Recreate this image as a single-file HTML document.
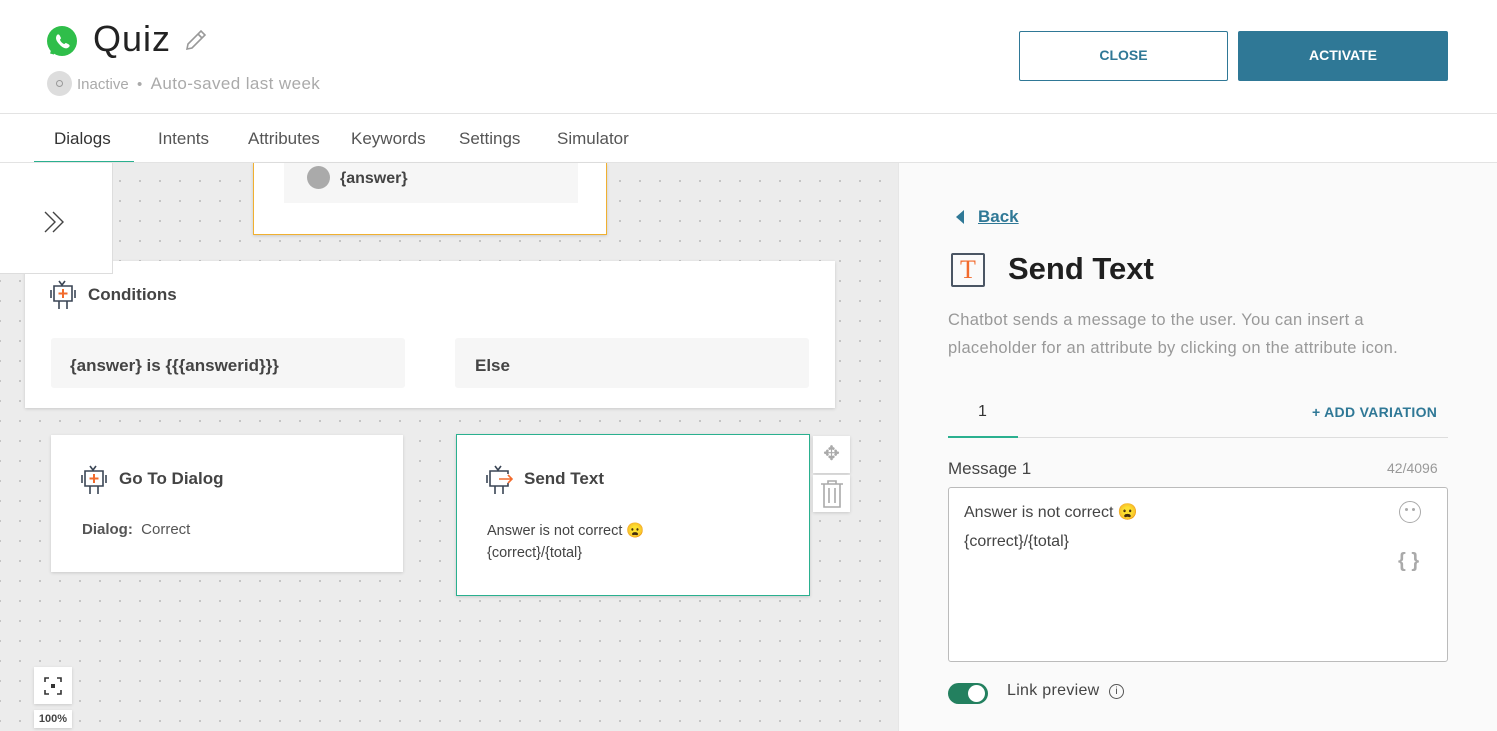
<!DOCTYPE html>
<html><head><style>
*{box-sizing:border-box;margin:0;padding:0}
body{width:1497px;height:731px;overflow:hidden;font-family:"Liberation Sans",sans-serif;background:#fff;position:relative;color:#333}
.a{position:absolute}
.canvas{left:0;top:163px;width:898px;height:568px;background-color:#ececec;background-image:radial-gradient(#b8b8b8 0.8px,transparent 1px);background-size:20px 20px;background-position:10px 8px}
.card{background:#fff;box-shadow:0 1px 3px rgba(0,0,0,.15)}
.bot{width:28px;height:34px}
</style></head><body>
<div class="a" style="left:47px;top:26px;width:30px;height:30px;border-radius:50%;background:#2fbe4a"></div>
<svg class="a" style="left:47px;top:26px" width="30" height="30" viewBox="0 0 30 30"><path d="M5 28 L7 21" stroke="#2fbe4a" stroke-width="4"/><path d="M10 9c1-1 2-1 3 1l1 2c0 1-1 1-1 2 1 2 2 3 4 4 1 0 1-1 2-1l2 1c2 1 2 2 1 3-2 2-5 2-9-2s-5-7-3-10z" fill="#fff"/></svg>
<div class="a" style="left:93px;top:18px;font-size:36px;color:#222;letter-spacing:1px">Quiz</div>
<svg class="a" style="left:183px;top:27px" width="26" height="26" viewBox="0 0 26 26"><path d="M4 22 L5 17 L18 4 L22 8 L9 21 Z M15 7 L19 11" fill="none" stroke="#999" stroke-width="1.6"/></svg>
<div class="a" style="left:47px;top:71px;width:25px;height:25px;border-radius:50%;background:#ddd"></div>
<div class="a" style="left:56px;top:80px;width:7px;height:7px;border-radius:50%;border:1.5px solid #999"></div>
<div class="a" style="left:77px;top:74px;font-size:15px;color:#aaa">Inactive &nbsp;•&nbsp; <span style="font-size:17px;letter-spacing:0.4px">Auto-saved last week</span></div>
<div class="a" style="left:1019px;top:31px;width:209px;height:50px;border:1px solid #2f7896;border-radius:2px;color:#2f7896;font-weight:bold;font-size:14px;text-align:center;line-height:46px">CLOSE</div>
<div class="a" style="left:1238px;top:31px;width:210px;height:50px;background:#2f7896;border-radius:2px;color:#fff;font-weight:bold;font-size:14px;text-align:center;line-height:48px">ACTIVATE</div>
<div class="a" style="left:0;top:113px;width:1497px;height:1px;background:#e3e3e3"></div>
<div class="a" style="top:129px;left:54px;font-size:17px;color:#333">Dialogs</div>
<div class="a" style="top:129px;left:158px;font-size:17px;color:#555">Intents</div>
<div class="a" style="top:129px;left:248px;font-size:17px;color:#555">Attributes</div>
<div class="a" style="top:129px;left:351px;font-size:17px;color:#555">Keywords</div>
<div class="a" style="top:129px;left:459px;font-size:17px;color:#555">Settings</div>
<div class="a" style="top:129px;left:557px;font-size:17px;color:#555">Simulator</div>
<div class="a canvas"></div>
<div class="a" style="left:34px;top:161px;width:100px;height:2px;background:#2ab08f"></div>
<div class="a" style="left:0;top:162px;width:1497px;height:1px;background:#e3e3e3"></div>
<div class="a card" style="left:253px;top:163px;width:354px;height:72px;border:1px solid #f0b030;border-top:none"></div>
<div class="a" style="left:284px;top:163px;width:294px;height:40px;background:#f6f6f6"></div>
<div class="a" style="left:307px;top:166px;width:23px;height:23px;border-radius:50%;background:#aaa"></div>
<div class="a" style="left:340px;top:170px;font-size:16px;font-weight:bold;color:#444">{answer}</div>
<div class="a card" style="left:25px;top:261px;width:810px;height:147px"></div>
<div class="a" style="left:0;top:163px;width:113px;height:111px;background:#fff;border:1px solid #ddd;border-top:none;border-left:none"></div>
<svg class="a" style="left:42px;top:210px" width="24" height="24" viewBox="0 0 24 24"><path d="M3 2l10 10-10 10M11 2l10 10-10 10" fill="none" stroke="#444" stroke-width="1.4"/></svg>
<svg class="a bot" style="left:49px;top:279px" viewBox="0 0 28 34"><path d="M10 2l3 4 3-4M5 7h18v15H5z M2 11v8 M26 11v8 M10 22v8 M18 22v8" fill="none" stroke="#3a4555" stroke-width="1.6"/><path d="M14 10v9M9.5 14.5h9" stroke="#f26b2d" stroke-width="2"/></svg>
<div class="a" style="left:88px;top:285px;font-size:17px;font-weight:bold;color:#444">Conditions</div>
<div class="a" style="left:51px;top:338px;width:354px;height:50px;background:#f6f6f6;border-radius:3px"></div>
<div class="a" style="left:70px;top:356px;font-size:17px;font-weight:bold;color:#444">{answer} is {{{answerid}}}</div>
<div class="a" style="left:455px;top:338px;width:354px;height:50px;background:#f6f6f6;border-radius:3px"></div>
<div class="a" style="left:475px;top:356px;font-size:17px;font-weight:bold;color:#444">Else</div>
<div class="a card" style="left:51px;top:435px;width:352px;height:137px"></div>
<svg class="a bot" style="left:80px;top:464px" viewBox="0 0 28 34"><path d="M10 2l3 4 3-4M5 7h18v15H5z M2 11v8 M26 11v8 M10 22v8 M18 22v8" fill="none" stroke="#3a4555" stroke-width="1.6"/><path d="M14 10v9M9.5 14.5h9" stroke="#f26b2d" stroke-width="2"/></svg>
<div class="a" style="left:119px;top:469px;font-size:17px;font-weight:bold;color:#444">Go To Dialog</div>
<div class="a" style="left:82px;top:521px;font-size:15px;color:#555"><b>Dialog:</b>&nbsp; Correct</div>
<div class="a card" style="left:456px;top:434px;width:354px;height:162px;border:1px solid #2ab08f"></div>
<svg class="a bot" style="left:485px;top:464px" viewBox="0 0 28 34"><path d="M10 2l3 4 3-4M23 10V7H5v15h18v-3 M2 11v8 M10 22v8 M18 22v8" fill="none" stroke="#3a4555" stroke-width="1.6"/><path d="M14 15h13M23 11l4 4-4 4" fill="none" stroke="#f26b2d" stroke-width="1.6"/></svg>
<div class="a" style="left:524px;top:469px;font-size:17px;font-weight:bold;color:#444">Send Text</div>
<div class="a" style="left:487px;top:520px;font-size:14.5px;color:#444;line-height:22px">Answer is not correct 😦<br>{correct}/{total}</div>
<div class="a card" style="left:813px;top:436px;width:37px;height:37px;color:#aaa;text-align:center;line-height:37px;font-size:20px">✥</div>
<div class="a card" style="left:813px;top:475px;width:37px;height:37px"></div>
<svg class="a" style="left:819px;top:479px" width="26" height="30" viewBox="0 0 26 30"><path d="M2 5h22M9 5V2h8v3M5 5v23h16V5M10 9v15M16 9v15" fill="none" stroke="#aaa" stroke-width="1.6"/></svg>
<div class="a card" style="left:34px;top:667px;width:38px;height:37px"></div>
<svg class="a" style="left:44px;top:677px" width="18" height="18" viewBox="0 0 18 18"><path d="M1 5V1h4M13 1h4v4M17 13v4h-4M5 17H1v-4" fill="none" stroke="#333" stroke-width="1.6"/><rect x="7" y="7" width="4" height="4" fill="#333"/></svg>
<div class="a card" style="left:34px;top:710px;width:38px;height:18px;font-size:11px;font-weight:bold;text-align:center;line-height:18px;color:#444">100%</div>
<div class="a" style="left:898px;top:163px;width:599px;height:568px;background:#fafafa;border-left:1px solid #e6e6e6"></div>
<div class="a" style="left:956px;top:210px;width:0;height:0;border-top:7px solid transparent;border-bottom:7px solid transparent;border-right:8px solid #2f7896"></div>
<div class="a" style="left:978px;top:207px;font-size:17px;font-weight:bold;color:#2f7896;text-decoration:underline">Back</div>
<div class="a" style="left:951px;top:253px;width:34px;height:34px;border:2px solid #4a5563;border-radius:2px;color:#f26b2d;font-size:26px;text-align:center;line-height:30px;font-family:'Liberation Serif',serif">T</div>
<div class="a" style="left:1008px;top:251px;font-size:31px;font-weight:bold;color:#1f1f1f">Send Text</div>
<div class="a" style="left:948px;top:306px;font-size:16.5px;color:#999;line-height:28px;width:470px;letter-spacing:0.3px">Chatbot sends a message to the user. You can insert a placeholder for an attribute by clicking on the attribute icon.</div>
<div class="a" style="left:978px;top:403px;font-size:16px;color:#333">1</div>
<div class="a" style="left:1312px;top:404px;font-size:14px;font-weight:bold;color:#2f7896;letter-spacing:0.3px">+ ADD VARIATION</div>
<div class="a" style="left:948px;top:437px;width:500px;height:1px;background:#ddd"></div>
<div class="a" style="left:948px;top:436px;width:70px;height:2px;background:#2ab08f"></div>
<div class="a" style="left:948px;top:459px;font-size:17px;color:#444">Message 1</div>
<div class="a" style="left:1387px;top:460px;font-size:14px;color:#999">42/4096</div>
<div class="a" style="left:948px;top:487px;width:500px;height:175px;background:#fff;border:1px solid #bbb;border-radius:3px"></div>
<div class="a" style="left:964px;top:498px;font-size:16px;color:#444;line-height:29px">Answer is not correct 😦<br>{correct}/{total}</div>
<div class="a" style="left:1399px;top:501px;width:22px;height:22px;border:1.5px solid #aaa;border-radius:50%"></div>
<div class="a" style="left:1405px;top:508px;width:3px;height:3px;background:#aaa;border-radius:50%;box-shadow:7px 0 #aaa"></div>
<div class="a" style="left:1398px;top:550px;font-size:20px;color:#aaa;font-weight:bold">{ }</div>
<div class="a" style="left:948px;top:683px;width:40px;height:21px;border-radius:11px;background:#23805f"></div>
<div class="a" style="left:968px;top:685px;width:17px;height:17px;border-radius:50%;background:#fff"></div>
<div class="a" style="left:1007px;top:682px;font-size:16px;color:#444;letter-spacing:0.3px">Link preview &nbsp;<span style="display:inline-block;width:15px;height:15px;border:1.2px solid #555;border-radius:50%;font-size:10px;text-align:center;line-height:13px;vertical-align:1px;letter-spacing:0">i</span></div>
</body></html>
